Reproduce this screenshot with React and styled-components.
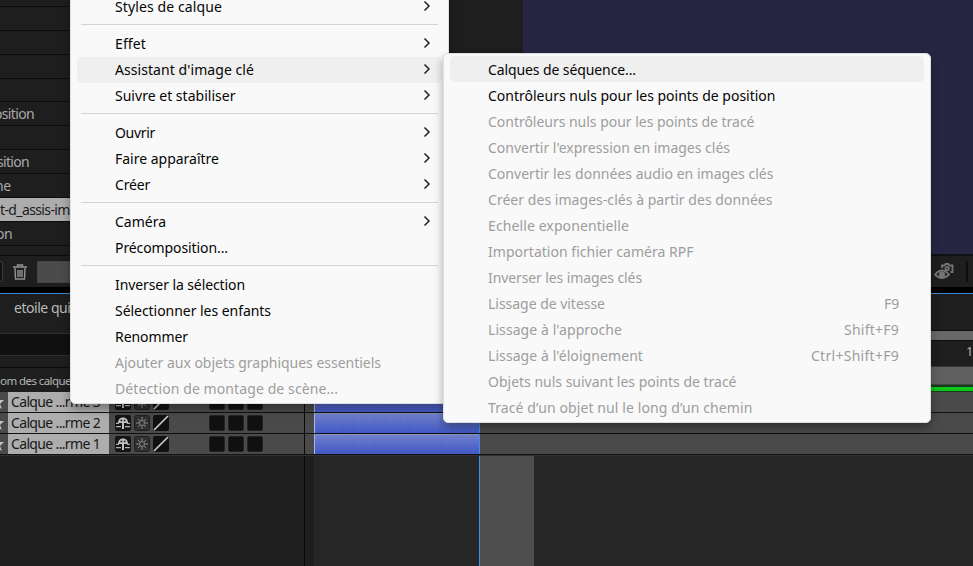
import React, { useLayoutEffect, useRef, useState } from 'react';
import styled, { createGlobalStyle } from 'styled-components';

const Global = createGlobalStyle`
  * { box-sizing: border-box; }
  body { margin: 0; background: #1e1e1e; overflow: hidden; font-family: "Noto Sans", "Open Sans", sans-serif; }
`;
const Window = styled.div`
  position: relative; width: 973px; height: 566px; overflow: hidden;
  display: flex; flex-direction: column; background: #1e1e1e;
`;
const Upper = styled.div`display: flex; height: 256px; flex: none;`;
const Project = styled.div`width: 450px; height: 256px; border-bottom: 1px solid #0c0c0c;`;
const ProjectRow = styled.div`
  height: ${p => p.$h || 24}px; display: flex; align-items: center;
  border-bottom: 1px solid #0d0d0d; padding-top: 1px; text-indent: ${p => p.$shift || 0}px;
  font-size: 14px; line-height: 16px; white-space: nowrap;
  color: ${p => (p.$on ? '#1c1c1c' : '#a9a9a9')};
  background: ${p => (p.$on ? '#acacac' : '#1e1e1e')};
`;
const FirstRow = styled(ProjectRow)`align-items: flex-end; padding-bottom: 1px;`;
const Viewer = styled.div`
  margin-left: 73px; flex: 1; height: 254px; background: #262643;
  box-shadow: 0 2px 0 #101010;
`;
const Tools = styled.div`
  height: 31px; flex: none; display: flex; align-items: center; background: #1e1e1e;
`;
const Edge = styled.div`width: 3px; height: 21px; border: solid #393939; border-width: 1px 1px 1px 0; border-radius: 0 4px 4px 0; background: #111;`;
const Trash = styled.svg`width: 14px; height: 16px; margin-left: 10px;`;
const Field = styled.div`width: 300px; height: 22px; margin-left: 10px; background: #4b4b4b; border: 1px solid #444;`;
const Eye = styled.svg`width: 20px; height: 20px; margin-left: auto;`;
const ToolSplit = styled.div`width: 2px; height: 21px; margin: 0 5px 0 12px; background: #0e0e0e;`;
const Gap = styled.div`height: 6px; flex: none; background: #000;`;
const Timeline = styled.div`
  flex: 1; display: grid; grid-template-rows: 39px 59px 63px 1fr; border-top: 1px solid #3e88cf; background: #1e1e1e;
`;
const Tab = styled.div`padding: 3px 0 0 14px; font-size: 14px; line-height: 18px; color: #b9b9b9; white-space: nowrap;`;
const Heads = styled.div`display: grid; grid-template-columns: 304px 1fr;`;
const NamesHead = styled.div`display: flex; flex-direction: column;`;
const Dark = styled.div`height: 23px; background: #101010; border-top: 1px solid #303030; border-bottom: 1px solid #303030;`;
const HeadLine = styled.div`height: 12px; border-bottom: 1px solid #0c0c0c;`;
const HeadText = styled.div`padding-top: 2px; font-size: 11.5px; line-height: 16px; color: #b5b5b5; white-space: nowrap;`;
const Ruler = styled.div`display: flex; flex-direction: column; margin-top: -3px;`;
const Navigator = styled.div`height: 11px; background: #686868; border: solid #101010; border-width: 1px 0;`;
const Ticks = styled.div`height: 26px; padding: 3px 0; text-align: right; font-size: 12px; line-height: 16px; color: #b8b8b8; border-bottom: 1px solid #383838;`;
const TickText = styled.span`display: block;`;
const WorkArea = styled.div`height: 18px; background: #606060; border-bottom: 1px solid #444;`;
const Cached = styled.div`height: 7px; background: #10c51b; border: solid #163d19; border-width: 2px 0 1px;`;
const Layers = styled.div`display: flex; flex-direction: column;`;
const Layer = styled.div`
  height: 21px; display: grid; grid-template-columns: 304px 2px 8px 165px 1fr;
  border-bottom: 1px solid #111; background: #4a4a4a;
`;
const Cells = styled.div`display: flex; align-items: center; height: 20px;`;
const Star = styled.svg`width: 4px; height: 13px; margin-right: 4px; flex: none;`;
const Name = styled.div`width: 101px; height: 20px; padding-left: 3px; background: #adadad; color: #171717; font-size: 14px; line-height: 18px; white-space: nowrap; flex: none;`;
const NameText = styled.div`margin-top: -1px;`;
const Switches = styled.div`display: flex; gap: 3px; margin-left: 6px;`;
const SwitchIcon = styled.svg`width: 16px; height: 16px; display: block;`;
const Boxes = styled.div`display: flex; gap: 3px; margin-left: 40px;`;
const Box = styled.div`width: 16px; height: 16px; border-radius: 2px; background: #101010; border: 1px solid #222;`;
const Split = styled.div`background: #080808; width: 1px;`;
const Clip = styled.div`
  grid-column: 4; height: 20px; border-left: 1px solid #a9b6ef; border-top: 1px solid #8791b5;
  background: repeating-linear-gradient(83deg, #ffffff04 0 1px, #0000 1px 5px, #00003005 5px 6px, #0000 6px 11px),
    linear-gradient(#7180cc, #5569c8 55%, #4259c6);
`;
const ClipEnd = styled.div`border-left: 1px solid #3c8ff0;`;
const Body = styled.div`display: grid; grid-template-columns: 304px 10px 165px 55px 1fr; border-top: 1px solid #303030;`;
const BodyCol = styled.div`
  background: ${p => p.$bg};
  border-left: ${p => (p.$line ? `1px solid ${p.$line}` : '0')};
`;
const Menu = styled.div`
  position: absolute; background: #f9f9f9; border: 1px solid #dedede;
  box-shadow: 0 5px 10px #0005; font-size: 14px; color: #050505;
`;
const LayerMenu = styled(Menu)`left: 70px; top: -10px; width: 379px; height: 414px; padding: 3px 6px; border-radius: 0 0 5px 5px;`;
const SubMenu = styled(Menu)`left: 443px; top: 53px; width: 488px; height: 370px; padding: 2px 6px; border-radius: 5px;`;
const Item = styled.div`
  height: 26px; display: flex; align-items: center; justify-content: space-between;
  padding: ${p => (p.$sub ? 2 : 0)}px ${p => (p.$sub ? 25 : 11)}px 0 38px; border-radius: 5px;
  background: ${p => (p.$on ? '#efefef' : 'transparent')};
  color: ${p => (p.$off ? '#9d9d9d' : '#050505')};
`;
const Rule = styled.div`height: 1px; margin: 4px 4px 6px 4px; background: #d3d3d3;`;
const Label = styled.span`white-space: pre; line-height: 22px;`;
const Chevron = styled.svg`width: 8px; height: 12px; margin-bottom: 2px;`;

function Fit({ width, children }) {
  const ref = useRef(null);
  const [spacing, setSpacing] = useState(0);
  useLayoutEffect(() => {
    const natural = ref.current.getBoundingClientRect().width;
    setSpacing((width - natural) / children.length);
  }, []);
  return <Label ref={ref} style={{ letterSpacing: `${spacing}px` }}>{children}</Label>;
}

const groups = [
  [['Styles de calque', 107, 'more']],
  [['Effet', 31, 'more'], ["Assistant d'image clé", 139, 'on'], ['Suivre et stabiliser', 120.5, 'more']],
  [['Ouvrir', 40, 'more'], ['Faire apparaître', 104, 'more'], ['Créer', 35, 'more']],
  [['Caméra', 51, 'more'], ['Précomposition...', 113]],
  [['Inverser la sélection', 130], ['Sélectionner les enfants', 156], ['Renommer', 73],
    ['Ajouter aux objets graphiques essentiels', 266, 'off'], ['Détection de montage de scène...', 223, 'off']],
];
const assistants = [
  ['Calques de séquence...', 148], ['Contrôleurs nuls pour les points de position', 287.5],
  ['Contrôleurs nuls pour les points de tracé', 266.5], ["Convertir l'expression en images clés", 242],
  ['Convertir les données audio en images clés', 285.5], ['Créer des images-clés à partir des données', 284.5],
  ['Echelle exponentielle', 141], ['Importation fichier caméra RPF', 205.5], ['Inverser les images clés', 154],
  ['Lissage de vitesse', 117, 'F9', 15], ["Lissage à l'approche", 134, 'Shift+F9', 55],
  ["Lissage à l'éloignement", 155, 'Ctrl+Shift+F9', 88], ['Objets nuls suivant les points de tracé', 248.5],
  ['Tracé d’un objet nul le long d’un chemin', 264.5],
];

const LayerRow = ({ n }) => (
  <Layer>
    <Cells>
      <Star viewBox="0 0 4 13"><path d="M-3 0 -1 4 4 4 0 8 2 13 -3 10Z" fill="#c2c2c2" /></Star>
      <Name><NameText><Fit width={89}>{`Calque ...rme ${n}`}</Fit></NameText></Name>
      <Switches>
        <SwitchIcon viewBox="0 0 16 16">
          <rect width="16" height="16" rx="2" fill="#141414" />
          <path d="M3 8C3 .8 13 .8 13 8Z" fill="#c2c2c2" />
          <path d="M5.5 5.5h1.7M8.8 5.5h1.7" stroke="#141414" strokeWidth="1.5" />
          <path d="M8 7v7" stroke="#c2c2c2" strokeWidth="2" />
          <path d="M1 8.3h3M12 8.3h3M1 11.7h5M10 11.7h5" stroke="#b2b2b2" strokeWidth="1.2" />
        </SwitchIcon>
        <SwitchIcon viewBox="0 0 16 16">
          <rect x=".5" y=".5" width="15" height="15" rx="2" fill="#303030" stroke="#1f1f1f" />
          <circle cx="8" cy="8" r="2.5" fill="none" stroke="#858585" />
          <path d="M8 2v3M8 11v3M2 8h3M11 8h3M4 4l2 2M10 10l2 2M12 4l-2 2M6 10l-2 2" stroke="#858585" />
        </SwitchIcon>
        <SwitchIcon viewBox="0 0 16 16">
          <rect width="16" height="16" rx="2" fill="#111" /><path d="M1 15 15 1" stroke="#c8c8c8" strokeWidth="1.7" />
        </SwitchIcon>
      </Switches>
      <Boxes><Box /><Box /><Box /></Boxes>
    </Cells>
    <Split /><div /><Clip /><ClipEnd />
  </Layer>
);

export default function App() {
  return (
    <Window>
      <Global />
      <Upper>
        <Project>
          <FirstRow $h={7}><Fit width={20}>res</Fit></FirstRow>
          <ProjectRow /><ProjectRow /><ProjectRow />
          <ProjectRow $h={23} />
          <ProjectRow $shift={-6}><Fit width={34}>osition</Fit></ProjectRow>
          <ProjectRow />
          <ProjectRow $shift={-3}><Fit width={29}>sition</Fit></ProjectRow>
          <ProjectRow $shift={-5}><Fit width={11}>ne</Fit></ProjectRow>
          <ProjectRow $on><Fit width={77}>t-d_assis-ima</Fit></ProjectRow>
          <ProjectRow $shift={-4}><Fit width={12}>on</Fit></ProjectRow>
        </Project>
        <Viewer />
      </Upper>
      <Tools>
        <Edge />
        <Trash viewBox="0 0 14 16" fill="none" stroke="#929292" strokeWidth="1.4">
          <path d="M0 3h14M4.5 3V1h5v2M2 4l.5 11h9L12 4M5 6v7M7 6v7M9 6v7" />
        </Trash>
        <Field />
        <Eye viewBox="0 0 20 20" fill="none" stroke="#747474" strokeWidth="1.8">
          <path d="M1 12.5q7-8 14 0q-7 7-14 0Z" /><circle cx="8" cy="12.5" r="2.2" fill="#747474" />
          <path d="M8 6V3.5h2.5l1-1.5h3l1 1.5h3V10h-2" /><circle cx="13.2" cy="6.5" r="1.7" />
        </Eye>
        <ToolSplit />
      </Tools>
      <Gap />
      <Timeline>
        <Tab><Fit width={61}>etoile quit</Fit></Tab>
        <Heads>
          <NamesHead>
            <Dark /><HeadLine />
            <HeadText><Fit width={71}>om des calque</Fit></HeadText>
          </NamesHead>
          <Ruler><Navigator /><Ticks><TickText>1</TickText></Ticks><WorkArea /><Cached /></Ruler>
        </Heads>
        <Layers>{[3, 2, 1].map(n => <LayerRow key={n} n={n} />)}</Layers>
        <Body>
          <BodyCol $bg="#1e1e1e" />
          <BodyCol $bg="#1e1e1e" $line="#080808" />
          <BodyCol $bg="#262626" />
          <BodyCol $bg="#4d4d4d" $line="#3c8ff0" />
          <BodyCol $bg="#262626" />
        </Body>
      </Timeline>
      <LayerMenu>
        {groups.map((group, i) => (
          <React.Fragment key={i}>
            {i > 0 && <Rule />}
            {group.map(([text, width, kind]) => (
              <Item key={text} $on={kind === 'on'} $off={kind === 'off'}>
                <Fit width={width}>{text}</Fit>
                {(kind === 'more' || kind === 'on') && (
                  <Chevron viewBox="0 0 8 12" fill="none" stroke="#222" strokeWidth="1.5"><path d="m1.5 1.5 4.5 4.5-4.5 4.5" /></Chevron>
                )}
              </Item>
            ))}
          </React.Fragment>
        ))}
      </LayerMenu>
      <SubMenu>
        {assistants.map(([text, width, keys, keysWidth], i) => (
          <Item key={text} $sub $on={i === 0} $off={i > 1}>
            <Fit width={width}>{text}</Fit>
            {keys && <Fit width={keysWidth}>{keys}</Fit>}
          </Item>
        ))}
      </SubMenu>
    </Window>
  );
}
